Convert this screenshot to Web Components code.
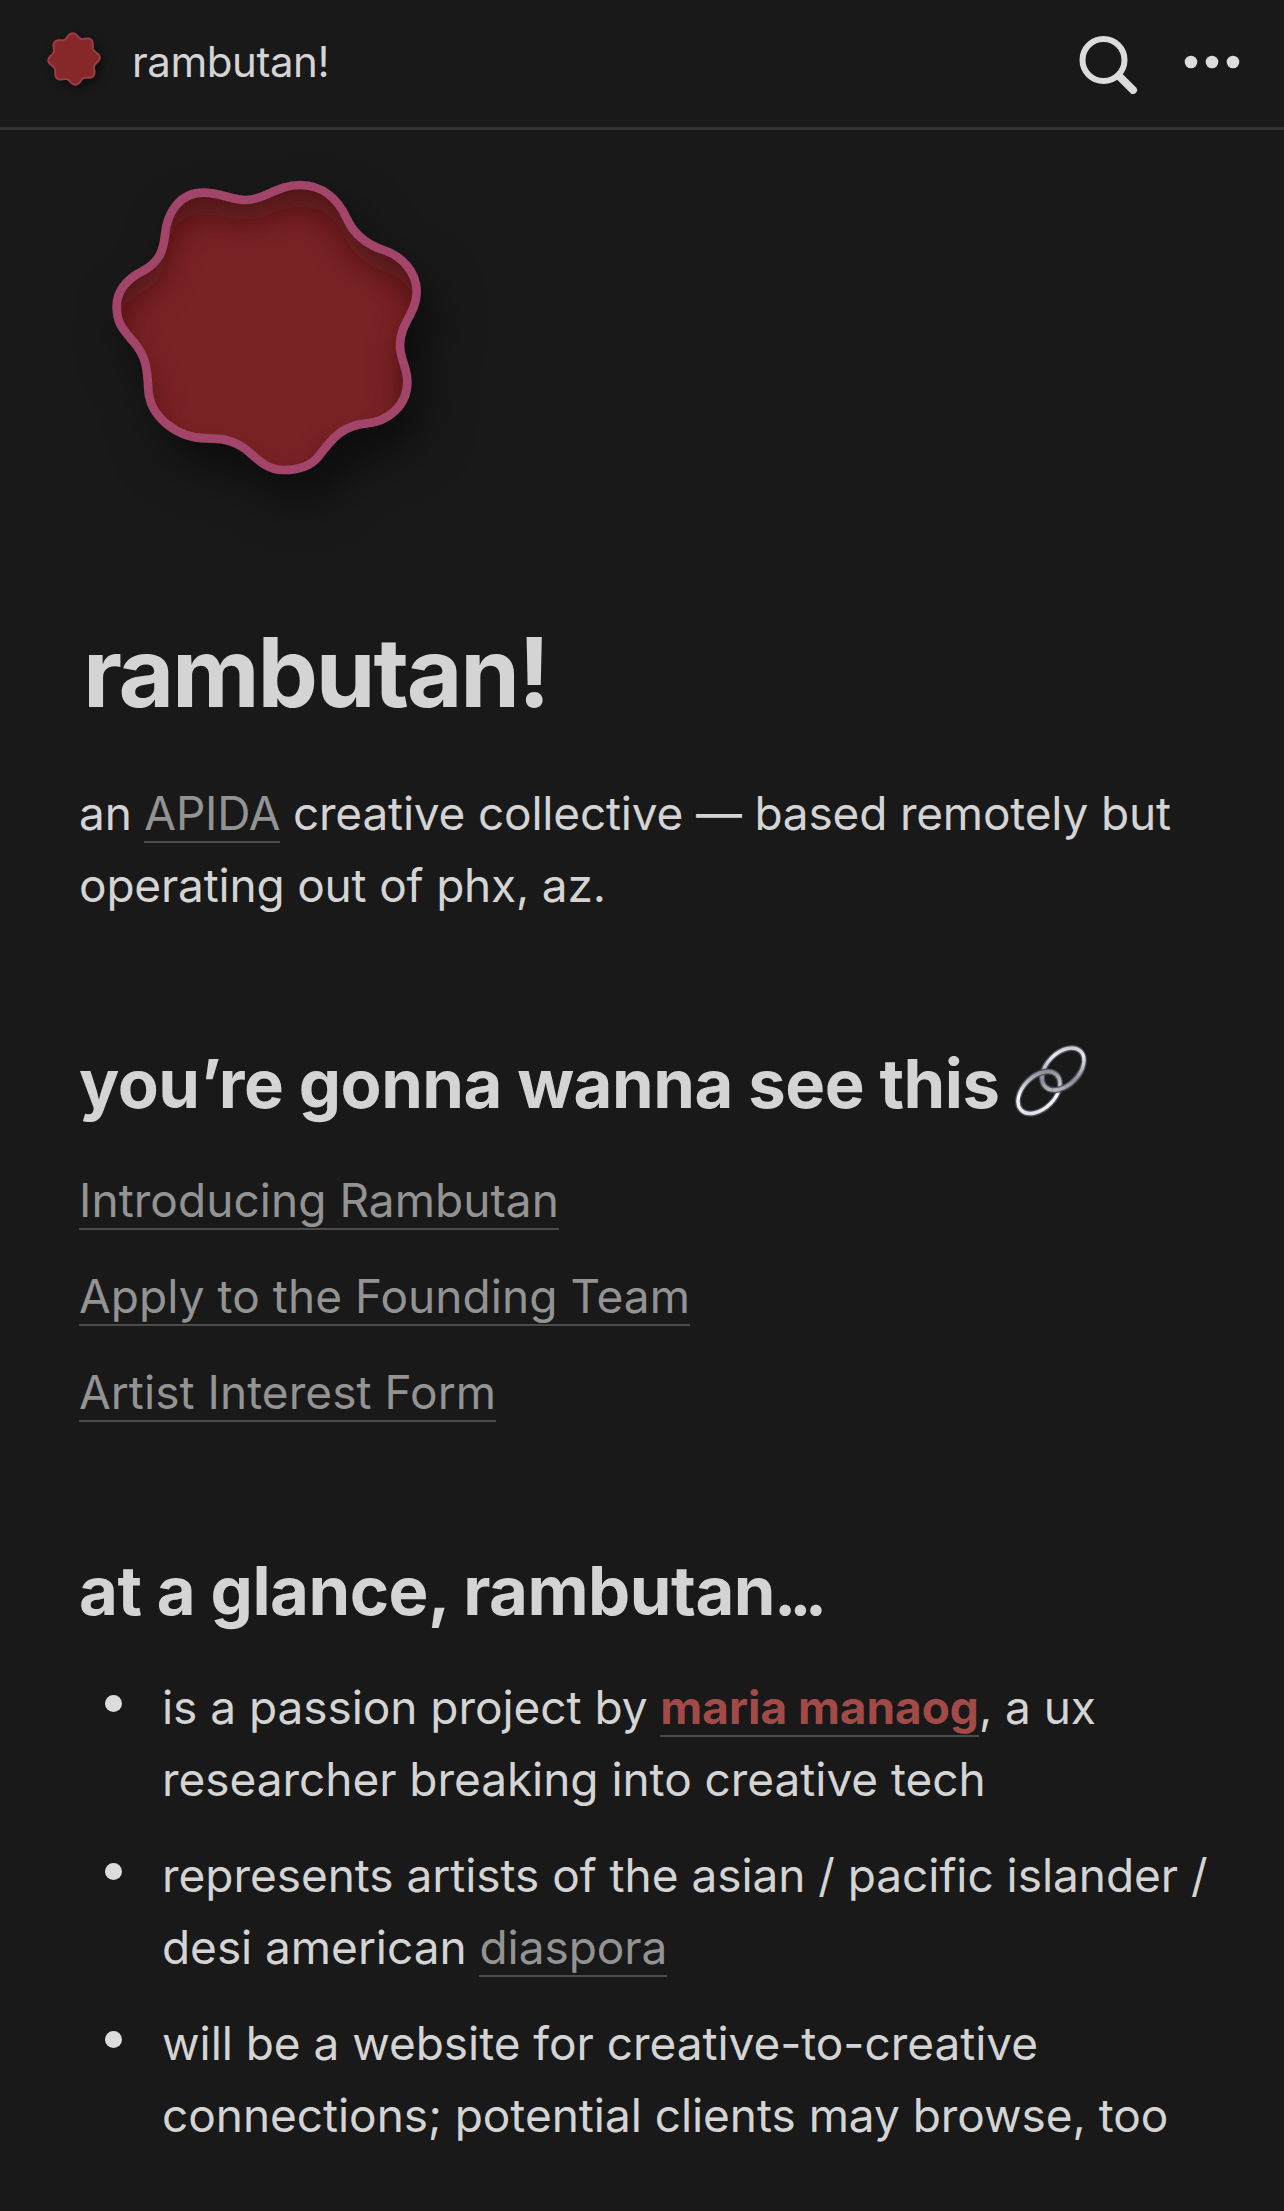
<!DOCTYPE html>
<html lang="en">
<head>
<meta charset="utf-8">
<title>rambutan!</title>
<style>
  html, body { margin: 0; background: #191919; }
  body {
    color: #d4d4d4;
    font-family: Inter, "Liberation Sans", sans-serif;
    overflow: hidden;
  }
  main-column { display: block; padding: 0 60px 0 79px; }
</style>
</head>
<body>
<app-bar>rambutan!</app-bar>
<page-mark></page-mark>
<main-column>
  <doc-title>rambutan!</doc-title>
  <doc-para class="intro">an <doc-link>APIDA</doc-link> creative collective — based remotely but operating out of phx, az.</doc-para>
  <doc-heading>you’re gonna wanna see this <chain-icon></chain-icon></doc-heading>
  <doc-para class="link-row"><doc-link>Introducing Rambutan</doc-link></doc-para>
  <doc-para class="link-row"><doc-link>Apply to the Founding Team</doc-link></doc-para>
  <doc-para class="link-row"><doc-link>Artist Interest Form</doc-link></doc-para>
  <doc-heading>at a glance, rambutan<tight-dots>...</tight-dots></doc-heading>
  <doc-bullet>is a passion project by <doc-link strong>maria manaog</doc-link>, a ux researcher breaking into creative tech</doc-bullet>
  <doc-bullet>represents artists of the asian / pacific islander / desi american <doc-link>diaspora</doc-link></doc-bullet>
  <doc-bullet>will be a website for creative-to-creative connections; potential clients may browse, too</doc-bullet>
</main-column>

<script>
// big blob outline, traced from the hero icon
const BLOB = 'M370 128 C425 128 450 150 500 150 C555 150 590 105 660 105 C730 105 775 150 800 205 C825 260 865 285 910 300 C965 318 1010 365 1010 425 C1010 490 960 520 960 585 C960 630 982 650 982 695 C982 770 920 815 860 820 C790 826 760 860 715 920 C690 950 650 960 610 960 C560 960 530 925 500 900 C460 868 420 865 380 865 C290 865 210 800 205 720 C202 660 200 620 160 575 C130 540 110 520 110 470 C110 420 145 385 190 362 C240 335 250 300 255 255 C262 180 305 128 370 128 Z';

// little header mark: a circle with eight soft lobes
function waveCircle(c, r, amp, lobes) {
  const pts = [];
  for (let i = 0; i < 160; i++) {
    const t = (i / 160) * Math.PI * 2;
    const d = r + amp * Math.cos(lobes * t + 0.5);
    pts.push((c + d * Math.cos(t)).toFixed(2) + ' ' + (c + d * Math.sin(t)).toFixed(2));
  }
  return 'M' + pts.join(' L') + ' Z';
}

class AppBar extends HTMLElement {
  constructor() {
    super();
    this.attachShadow({ mode: 'open' });
    this.shadowRoot.innerHTML = `
      <style>
        :host {
          display: flex;
          align-items: center;
          box-sizing: border-box;
          height: 130px;
          padding: 0 44px 6px 47px;
          border-bottom: 3px solid #333;
          font-size: 42px;
          font-weight: 380;
          letter-spacing: -0.45px;
          color: #d4d4d4;
        }
        .name { margin-left: 31px; flex: 1; padding-top: 2px; }
        svg { display: block; }
        .mark { filter: drop-shadow(3px 4px 5px rgba(0,0,0,.5)); margin-top: -4px; }
        .search { margin-right: 46px; margin-top: 6px; }
        .more { margin-top: 2px; }
      </style>
      <svg class="mark" width="54" height="54" viewBox="0 0 54 54">
        <path fill="#862829" stroke="#9c3c46" stroke-width="2" d="${waveCircle(27, 23.6, 2.2, 8)}"/>
      </svg>
      <span class="name"><slot></slot></span>
      <svg class="search" width="60" height="60" viewBox="0 0 60 60" fill="none" stroke="#dcdcdc" stroke-linecap="round">
        <circle cx="25.5" cy="26" r="21" stroke-width="6"/>
        <path d="M41 42 L55 56" stroke-width="8"/>
      </svg>
      <svg class="more" width="56" height="14" viewBox="0 0 56 14" fill="#dcdcdc">
        <circle cx="7" cy="7" r="6.3"/><circle cx="28" cy="7" r="6.3"/><circle cx="49" cy="7" r="6.3"/>
      </svg>`;
  }
}

class PageMark extends HTMLElement {
  constructor() {
    super();
    this.attachShadow({ mode: 'open' });
    this.shadowRoot.innerHTML = `
      <style>
        :host { display: block; height: 484px; padding: 20px 0 0 80px; box-sizing: border-box; }
        svg { display: block; overflow: visible; filter: drop-shadow(14px 26px 24px rgba(0,0,0,.5)); }
      </style>
      <svg width="400" height="360" viewBox="0 0 1200 1080">
        <defs>
          <clipPath id="inside"><path d="${BLOB}"/></clipPath>
          <filter id="soft" x="-10%" y="-10%" width="120%" height="120%"><feGaussianBlur stdDeviation="55"/></filter>
        </defs>
        <path d="${BLOB}" fill="#7a2325"/>
        <g clip-path="url(#inside)">
          <g filter="url(#soft)" opacity=".7">
            <path fill="#3a0e10" fill-rule="evenodd" transform="translate(0 62)" d="M-300 -300H1500V1400H-300Z ${BLOB}"/>
          </g>
        </g>
        <path d="${BLOB}" fill="none" stroke="#a3456a" stroke-width="26"/>
      </svg>`;
  }
}

class DocTitle extends HTMLElement {
  constructor() {
    super();
    this.attachShadow({ mode: 'open' });
    this.shadowRoot.innerHTML = `
      <style>
        :host {
          display: block;
          margin: 0 0 0 4px;
          padding-bottom: 23px;
          font-size: 96px;
          line-height: 116px;
          font-weight: 700;
          letter-spacing: -2.2px;
          color: #d4d4d4;
        }
      </style>
      <slot></slot>`;
  }
}

class DocPara extends HTMLElement {
  constructor() {
    super();
    this.attachShadow({ mode: 'open' });
    this.shadowRoot.innerHTML = `
      <style>
        :host {
          display: block;
          font-size: 46px;
          font-weight: 380;
          line-height: 72px;
          letter-spacing: -0.05px;
          margin-top: 24px;
        }
        :host(.intro) { letter-spacing: -0.2px; }
        :host(.link-row) { letter-spacing: 0.05px; }
      </style>
      <slot></slot>`;
  }
}

class DocHeading extends HTMLElement {
  constructor() {
    super();
    this.attachShadow({ mode: 'open' });
    this.shadowRoot.innerHTML = `
      <style>
        :host {
          display: block;
          margin-top: 121px;
          padding-bottom: 14px;
          font-size: 67px;
          line-height: 84px;
          font-weight: 700;
          letter-spacing: -0.5px;
          color: #d4d4d4;
        }
      </style>
      <slot></slot>`;
  }
}

// the reference's ellipsis sits tighter than Inter's periods
class TightDots extends HTMLElement {
  constructor() {
    super();
    this.attachShadow({ mode: 'open' });
    this.shadowRoot.innerHTML = `
      <style>
        :host { display: inline; letter-spacing: -7px; margin-left: -10px; }
      </style>
      <slot></slot>`;
  }
}

class DocLink extends HTMLElement {
  constructor() {
    super();
    this.attachShadow({ mode: 'open' });
    this.shadowRoot.innerHTML = `
      <style>
        :host {
          display: inline-block;
          line-height: 56px;
          border-bottom: 2px solid #4c4c4c;
          color: #939393;
        }
        :host([strong]) { color: #a24a48; font-weight: 700; }
      </style>
      <slot></slot>`;
  }
}

class DocBullet extends HTMLElement {
  constructor() {
    super();
    this.attachShadow({ mode: 'open' });
    this.shadowRoot.innerHTML = `
      <style>
        :host {
          display: flex;
          margin-top: 24px;
          font-size: 46px;
          font-weight: 380;
          line-height: 72px;
          letter-spacing: -0.05px;
        }
        .dot { flex: 0 0 83px; }
        .dot::before {
          content: '';
          display: block;
          width: 17px;
          height: 17px;
          margin: 24px 0 0 26px;
          border-radius: 50%;
          background: #dcdcdc;
        }
        .body { flex: 1; }
      </style>
      <div class="dot"></div>
      <div class="body"><slot></slot></div>`;
  }
}

class ChainIcon extends HTMLElement {
  constructor() {
    super();
    this.attachShadow({ mode: 'open' });
    const upper = 'cx="48" cy="24" rx="25" ry="16" transform="rotate(-45 48 24)"';
    const lower = 'cx="24" cy="47.5" rx="25" ry="16" transform="rotate(-45 24 47.5)"';
    const ring = attrs => `
      <ellipse ${attrs} stroke="#4e4f58" stroke-width="6"/>
      <ellipse ${attrs} stroke="url(#metal)" stroke-width="3.4"/>`;
    this.shadowRoot.innerHTML = `
      <style>
        :host { display: inline-block; width: 72px; height: 72px; vertical-align: -9px; }
        svg { display: block; overflow: visible; }
      </style>
      <svg width="72" height="72" viewBox="0 0 72 72" fill="none">
        <defs>
          <linearGradient id="metal" gradientUnits="userSpaceOnUse" x1="0" y1="72" x2="72" y2="0">
            <stop offset="0" stop-color="#cfd2d8"/>
            <stop offset=".3" stop-color="#f6f8fb"/>
            <stop offset=".55" stop-color="#8b8d96"/>
            <stop offset=".8" stop-color="#e8ebf2"/>
            <stop offset="1" stop-color="#9a9ba3"/>
          </linearGradient>
          <clipPath id="cross"><circle cx="44.4" cy="44.2" r="7"/></clipPath>
        </defs>
        ${ring(upper)}
        ${ring(lower)}
        <g clip-path="url(#cross)">${ring(upper)}</g>
      </svg>`;
  }
}

customElements.define('app-bar', AppBar);
customElements.define('page-mark', PageMark);
customElements.define('doc-title', DocTitle);
customElements.define('doc-para', DocPara);
customElements.define('doc-heading', DocHeading);
customElements.define('tight-dots', TightDots);
customElements.define('doc-link', DocLink);
customElements.define('doc-bullet', DocBullet);
customElements.define('chain-icon', ChainIcon);
</script>
</body>
</html>
